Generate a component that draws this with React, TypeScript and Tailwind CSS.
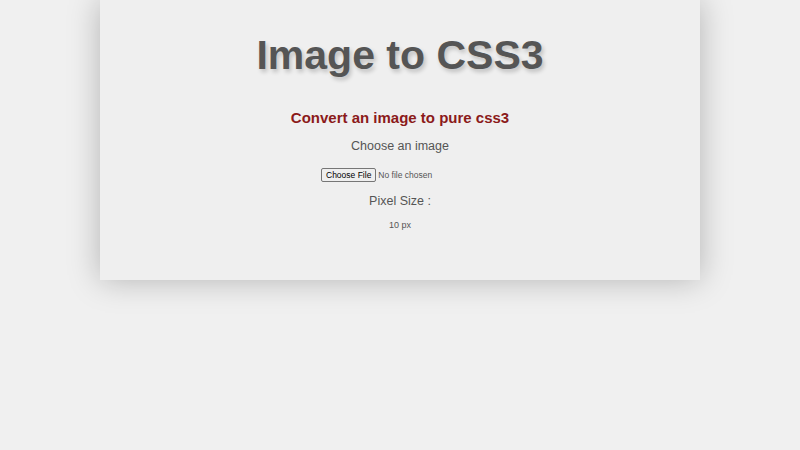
export default function App() {
  return (
    <div className="min-h-[450px] bg-[#f0f0f0] font-['Liberation_Sans',Arial,sans-serif]">
      <div className="mx-auto w-[600px] h-[280px] bg-[#efefef] shadow-[0_0_30px_rgba(0,0,0,0.25)] flex flex-col items-center pt-[30px]">
        <h1 className="text-[41px] leading-[50px] font-bold text-[#555555] [text-shadow:2px_3px_4px_rgba(0,0,0,0.2)]">
          Image to CSS3
        </h1>
        <h2 className="mt-[28px] text-[15px] leading-[20px] font-bold text-[#8b1a1a]">
          Convert an image to pure css3
        </h2>
        <p className="mt-[8px] text-[12.5px] leading-[20px] text-[#555555]">Choose an image</p>
        <input
          type="file"
          className="mt-[12px] h-[14px] w-[158px] text-[8.5px] leading-[12px] text-[#555555] file:mr-[2px] file:h-[14px] file:rounded-[2px] file:border file:border-[#767676] file:bg-[#efefef] file:px-[4px] file:text-[8.5px] file:text-black"
        />
        <p className="mt-[9px] text-[12.5px] leading-[20px] text-[#555555]">Pixel Size :</p>
        <p className="mt-[8px] text-[9px] leading-[12px] text-[#555555]">10 px</p>
      </div>
    </div>
  );
}
